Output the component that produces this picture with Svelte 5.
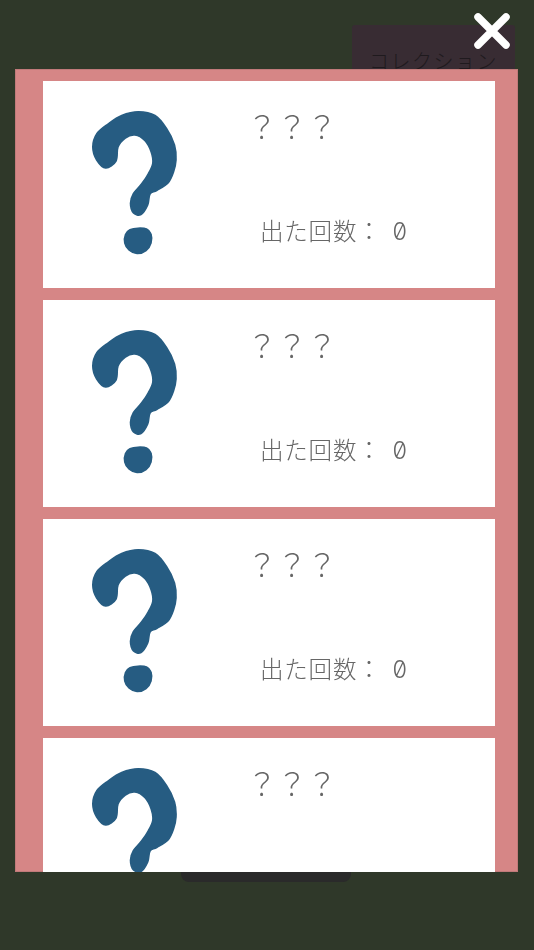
<script>
  const items = [0, 1, 2, 3].map((i) => ({ id: i, name: '？？？', count: 0 }))

  // outline of the hand drawn question mark, traced from the artwork
  const hook = [
    [105.7, 168], [96.7, 160], [92.8, 147], [97, 133.5], [108.3, 123.8], [121.7, 115.5],
    [138.3, 111.8], [155, 115.5], [166.5, 128.5], [174.5, 145], [176, 160], [173.5, 172],
    [168, 183], [156.7, 190.5], [150, 194], [147.7, 205], [141, 214.5], [133.5, 213],
    [130.5, 203.3], [133.5, 193.5], [141.7, 183.8], [148.3, 173.8], [152.8, 163.3], [151.2, 152],
    [144.8, 140.5], [135, 135], [125.3, 138], [118, 147], [116, 161]
  ]
  const dot = [
    [138, 228.2], [146.5, 229], [151, 234], [151, 243], [146, 250.5], [137, 253.5],
    [129, 250], [124.8, 243], [125.5, 234.5], [130, 229.8]
  ]

  function smooth(pts) {
    const n = pts.length
    let d = `M${pts[0][0]} ${pts[0][1]}`
    for (let i = 0; i < n; i++) {
      const p0 = pts[(i - 1 + n) % n]
      const p1 = pts[i]
      const p2 = pts[(i + 1) % n]
      const p3 = pts[(i + 2) % n]
      const c1x = p1[0] + (p2[0] - p0[0]) / 6
      const c1y = p1[1] + (p2[1] - p0[1]) / 6
      const c2x = p2[0] - (p3[0] - p1[0]) / 6
      const c2y = p2[1] - (p3[1] - p1[1]) / 6
      d += `C${c1x.toFixed(1)} ${c1y.toFixed(1)} ${c2x.toFixed(1)} ${c2y.toFixed(1)} ${p2[0]} ${p2[1]}`
    }
    return d + 'Z'
  }

  const markPath = smooth(hook) + smooth(dot)
</script>

<div class="screen">
  <button class="collection">コレクション</button>
  <div class="bottom-bar"></div>

  <svg class="defs" width="0" height="0" aria-hidden="true">
    <filter id="rough" x="-5%" y="-5%" width="110%" height="110%">
      <feTurbulence type="fractalNoise" baseFrequency="0.25" numOctaves="2" seed="4" result="noise" />
      <feDisplacementMap in="SourceGraphic" in2="noise" scale="1.2" />
      <feGaussianBlur stdDeviation="0.45" />
    </filter>
  </svg>

  <div class="overlay">
    <button class="close" aria-label="close">
      <svg viewBox="0 0 40 40" width="40" height="40">
        <path d="M6 6L34 34M34 6L6 34" stroke="#fff" stroke-width="7.5" stroke-linecap="round" />
      </svg>
    </button>
    <div class="panel">
      {#each items as item (item.id)}
        <div class="card">
          <svg class="mark" viewBox="90 109 89 147" width="89" height="147">
            <path fill="#265c82" stroke="#265c82" stroke-width="1.6" stroke-linejoin="round" filter="url(#rough)" d={markPath} />
          </svg>
          <div class="info">
            <p class="name">{item.name}</p>
            <p class="count">出た回数： <span class="num">{item.count}</span></p>
          </div>
        </div>
      {/each}
    </div>
  </div>
</div>

<style>
  :global(body) {
    margin: 0;
    background: #2f3829;
  }

  .screen {
    position: relative;
    width: 534px;
    height: 950px;
    overflow: hidden;
    background: #2f3829;
    display: flex;
    flex-direction: column;
    font-family: "Noto Sans CJK JP", "Noto Sans", sans-serif;
  }

  .defs {
    position: absolute;
  }

  .collection {
    align-self: flex-end;
    width: 163px;
    height: 70px;
    margin: 25px 19px 0 0;
    padding: 0;
    border: none;
    border-radius: 3px;
    background: #382c33;
    color: #1f1a1e;
    font-family: inherit;
    font-size: 20px;
    font-weight: 300;
    letter-spacing: 1.5px;
    display: flex;
    align-items: center;
    justify-content: center;
  }

  .bottom-bar {
    align-self: flex-start;
    width: 170px;
    height: 30px;
    margin: auto 0 68px 181px;
    border-radius: 0 0 8px 8px;
    background: #2a2a2a;
  }

  .overlay {
    position: absolute;
    inset: 0;
  }

  .close {
    position: absolute;
    top: 11px;
    right: 22px;
    width: 40px;
    height: 40px;
    padding: 0;
    border: none;
    background: none;
    z-index: 2;
  }

  .close svg {
    display: block;
  }

  .panel {
    position: absolute;
    top: 69px;
    left: 15px;
    width: 503px;
    height: 803px;
    box-sizing: border-box;
    padding: 12px 23px 0 28px;
    background: #d68686;
    box-shadow: inset 0 0 0 1px #c07a7a;
    overflow: hidden;
    display: flex;
    flex-direction: column;
    gap: 12.5px;
  }

  .card {
    flex: 0 0 206.5px;
    box-sizing: border-box;
    background: #fff;
    padding: 28px 0 0 47px;
    display: flex;
  }

  .mark {
    flex: none;
  }

  .info {
    margin-left: 68px;
    flex: 1;
    color: #666;
    font-weight: 300;
    will-change: transform;
  }

  .name {
    margin: -1px 0 0;
    font-size: 30px;
    line-height: 34px;
  }

  .count {
    margin: 71px 0 0 0;
    padding-left: 13px;
    font-size: 23.5px;
    letter-spacing: 0.8px;
    line-height: 34px;
    white-space: nowrap;
  }

  .num {
    font-family: "Inter", sans-serif;
    font-feature-settings: "zero";
    margin-left: 5px;
  }
</style>
